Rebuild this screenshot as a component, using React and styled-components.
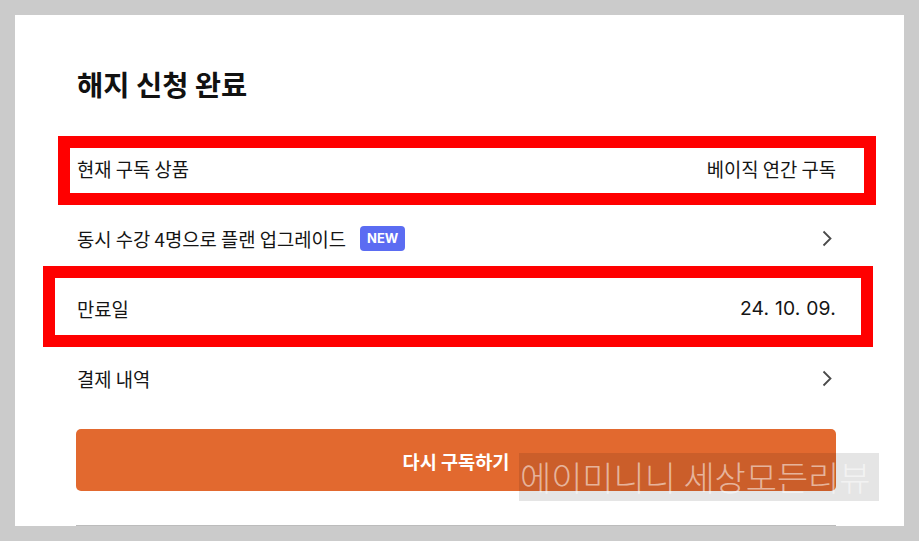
import React from "react";
import styled, { createGlobalStyle } from "styled-components";

const GlobalStyle = createGlobalStyle`
  html, body { margin: 0; padding: 0; background: #cbcbcb; }
  body { font-family: "Noto Sans CJK KR", "Noto Sans", sans-serif; color: #111; }
`;

const Page = styled.div`
  position: relative;
  width: 919px;
  height: 541px;
  overflow: hidden;
  padding: 15px 0 0 15px;
  box-sizing: border-box;
`;

const Card = styled.div`
  width: 889px;
  height: 511px;
  background: #fff;
  box-sizing: border-box;
  padding: 50px 68px 0 61px;
  overflow: hidden;
`;

const Title = styled.h1`
  margin: 0 0 31px 1px;
  font-size: 28.5px;
  line-height: 37px;
  font-weight: 700;
  color: #111;
`;

const List = styled.div`
  display: flex;
  flex-direction: column;
`;

const Row = styled.div`
  position: relative;
  height: 70px;
  display: flex;
  align-items: center;
  justify-content: space-between;
  padding-left: 1px;
  font-size: 18.8px;
  color: #151515;
`;

const Label = styled.div`
  display: flex;
  align-items: center;
  gap: 14px;
`;

const Value = styled.span`
  color: #151515;
`;

const DateValue = styled.span`
  font-family: "Inter", "Roboto", sans-serif;
  font-size: 19.3px;
  letter-spacing: 0.2px;
`;

const Badge = styled.span`
  display: inline-flex;
  align-items: center;
  justify-content: center;
  width: 45px;
  height: 25px;
  border-radius: 4px;
  background: #5b6cf2;
  color: #fff;
  font-family: "Inter", "Roboto", sans-serif;
  font-size: 13px;
  font-weight: 700;
`;

const Highlight = styled.div`
  position: absolute;
  top: ${(p) => p.$t}px;
  bottom: ${(p) => p.$b}px;
  left: ${(p) => p.$l}px;
  right: ${(p) => p.$r}px;
  border: 12px solid #ff0000;
  pointer-events: none;
`;

const Chevron = () => (
  <svg width="12" height="17" viewBox="0 0 12 17" style={{ marginRight: 3 }}>
    <path d="M2.5 1.5 L9.5 8.5 L2.5 15.5" fill="none" stroke="#4a4a4a" strokeWidth="1.8" />
  </svg>
);

const Button = styled.button`
  margin-top: 16px;
  height: 62px;
  width: 100%;
  border: none;
  border-radius: 5px;
  background: #e2692f;
  color: #fff;
  font-family: "Noto Sans CJK KR", sans-serif;
  font-size: 18.6px;
  font-weight: 700;
  cursor: pointer;
`;

const Divider = styled.div`
  margin-top: 34px;
  border-top: 1px solid #bcbcbc;
`;

const Watermark = styled.div`
  position: absolute;
  left: 519px;
  top: 453px;
  width: 360px;
  height: 48px;
  background: rgba(0, 0, 0, 0.1);
  color: rgba(255, 255, 255, 0.55);
  font-family: "Noto Sans CJK KR", sans-serif;
  font-weight: 300;
  font-size: 33.9px;
  line-height: 48px;
  padding-left: 1px;
  box-sizing: border-box;
  white-space: nowrap;
`;

export default function App() {
  return (
    <Page>
      <GlobalStyle />
      <Card>
        <Title>해지 신청 완료</Title>
        <List>
          <Row>
            <Label>현재 구독 상품</Label>
            <Value>베이직 연간 구독</Value>
            <Highlight $t={3} $b={-2} $l={-18} $r={-40} />
          </Row>
          <Row>
            <Label>
              동시 수강 4명으로 플랜 업그레이드
              <Badge>NEW</Badge>
            </Label>
            <Chevron />
          </Row>
          <Row>
            <Label>만료일</Label>
            <DateValue>24. 10. 09.</DateValue>
            <Highlight $t={-7} $b={-4} $l={-33} $r={-37} />
          </Row>
          <Row>
            <Label>결제 내역</Label>
            <Chevron />
          </Row>
        </List>
        <Button>다시 구독하기</Button>
        <Divider />
      </Card>
      <Watermark>에이미니니 세상모든리뷰</Watermark>
    </Page>
  );
}
